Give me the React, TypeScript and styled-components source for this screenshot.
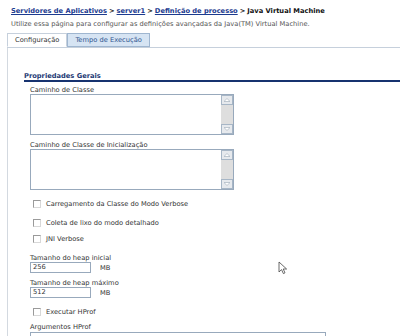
import styled, { createGlobalStyle } from 'styled-components'

const Global = createGlobalStyle`
  html, body {
    margin: 0;
    padding: 0;
    background: #fff;
    width: 400px;
    height: 336px;
    overflow: hidden;
  }
  body {
    font-family: 'DejaVu Sans', Verdana, sans-serif;
    font-size: 6.7px;
    color: #333;
  }
`

const Page = styled.div`
  position: relative;
  width: 400px;
  height: 336px;
  overflow: hidden;
`

const Header = styled.div`
  padding: 6px 0 0 11px;
`

const Crumbs = styled.div`
  font-weight: bold;
  color: #111;
  line-height: 10px;
  white-space: nowrap;
`

const CrumbLink = styled.a`
  color: #1c3b8f;
  text-decoration: underline;
`

const Sep = styled.span`
  color: #111;
  margin: 0 2px;
`

const Description = styled.div`
  color: #555;
  margin-top: 3px;
  line-height: 10px;
  white-space: nowrap;
`

const Tabs = styled.div`
  display: flex;
  margin: 4px 0 0 7px;
  border-bottom: 1px solid #c6d0dc;
  height: 14px;
`

const Tab = styled.div<{ active?: boolean }>`
  display: flex;
  align-items: center;
  padding: 0 7px;
  height: 14px;
  box-sizing: border-box;
  border: 1px solid ${(p) => (p.active ? '#c6d0dc' : '#9fb6d0')};
  border-bottom: ${(p) => (p.active ? '1px solid #fff' : '1px solid #9fb6d0')};
  background: ${(p) => (p.active ? '#fff' : '#d6e4f3')};
  color: ${(p) => (p.active ? '#333' : '#2f5590')};
  margin-bottom: -1px;
  white-space: nowrap;
  position: relative;
  z-index: 1;
`

const Panel = styled.div`
  margin-left: 7px;
  border-left: 1px solid #d3d9e0;
  padding: 25px 0 0 16px;
  height: 300px;
`

const SectionTitle = styled.div`
  font-weight: bold;
  color: #1e3a74;
  line-height: 7px;
  border-bottom: 2px solid #17336f;
`

const Fields = styled.div`
  padding: 4px 0 0 6px;
  display: flex;
  flex-direction: column;
`

const Label = styled.div<{ gap?: number }>`
  line-height: 8px;
  height: 8px;
  color: #333;
  margin-top: ${(p) => p.gap ?? 0}px;
  white-space: nowrap;
`

const Area = styled.div`
  display: flex;
  width: 204px;
  height: 41px;
  box-sizing: border-box;
  border: 1px solid #98a9bc;
  background: #fff;
`

const AreaBody = styled.div`
  flex: 1;
`

const Scroll = styled.div`
  width: 12px;
  background: #dedede;
  display: flex;
  flex-direction: column;
  justify-content: space-between;
`

const ScrollBtn = styled.div`
  width: 12px;
  height: 10px;
  box-sizing: border-box;
  border: 1px solid #a7b6c6;
  background: #e6e9ed;
  display: flex;
  align-items: center;
  justify-content: center;
`

const CheckRow = styled.label<{ gap?: number }>`
  display: flex;
  align-items: center;
  margin: ${(p) => p.gap ?? 0}px 0 0 3px;
  height: 10px;
  white-space: nowrap;
`

const Box = styled.span`
  width: 8px;
  height: 8px;
  box-sizing: border-box;
  border: 1px solid #9a9a9a;
  border-right-color: #d8d8d8;
  border-bottom-color: #d8d8d8;
  background: #fff;
  margin-right: 5px;
`

const SizeRow = styled.div`
  display: flex;
  align-items: center;
  gap: 9px;
`

const SizeInput = styled.div`
  width: 61px;
  height: 11px;
  box-sizing: border-box;
  border: 1px solid #98a9bc;
  padding-left: 2px;
  line-height: 9px;
  color: #333;
`

const WideInput = styled.div`
  margin-top: 1px;
  width: 296px;
  height: 12px;
  box-sizing: border-box;
  border: 1px solid #98a9bc;
  border-bottom: none;
`

const Cursor = styled.svg`
  position: absolute;
  left: 278px;
  top: 261px;
`

const Arrow = ({ down }: { down?: boolean }) => (
  <svg width="6" height="4" viewBox="0 0 6 4">
    <path d={down ? 'M0 0.5H6L3 3.5Z' : 'M0 3.5H6L3 0.5Z'} fill="#fff" stroke="#9aa8b6" strokeWidth="0.6" />
  </svg>
)

const TextArea = () => (
  <Area>
    <AreaBody />
    <Scroll>
      <ScrollBtn>
        <Arrow />
      </ScrollBtn>
      <ScrollBtn>
        <Arrow down />
      </ScrollBtn>
    </Scroll>
  </Area>
)

export default function App() {
  return (
    <Page>
      <Global />
      <Header>
        <Crumbs>
          <CrumbLink>Servidores de Aplicativos</CrumbLink>
          <Sep>&gt;</Sep>
          <CrumbLink>server1</CrumbLink>
          <Sep>&gt;</Sep>
          <CrumbLink>Definição de processo</CrumbLink>
          <Sep>&gt;</Sep>
          Java Virtual Machine
        </Crumbs>
        <Description>
          Utilize essa página para configurar as definições avançadas da Java(TM) Virtual Machine.
        </Description>
      </Header>
      <Tabs>
        <Tab active>Configuração</Tab>
        <Tab>Tempo de Execução</Tab>
      </Tabs>
      <Panel>
        <SectionTitle>Propriedades Gerais</SectionTitle>
        <Fields>
          <Label>Caminho de Classe</Label>
          <TextArea />
          <Label gap={6}>Caminho de Classe de Inicialização</Label>
          <TextArea />
          <CheckRow gap={9}>
            <Box />
            Carregamento da Classe do Modo Verbose
          </CheckRow>
          <CheckRow gap={9}>
            <Box />
            Coleta de lixo do modo detalhado
          </CheckRow>
          <CheckRow gap={6}>
            <Box />
            JNI Verbose
          </CheckRow>
          <Label gap={10}>Tamanho do heap inicial</Label>
          <SizeRow>
            <SizeInput>256</SizeInput>
            MB
          </SizeRow>
          <Label gap={6}>Tamanho de heap máximo</Label>
          <SizeRow>
            <SizeInput>512</SizeInput>
            MB
          </SizeRow>
          <CheckRow gap={9}>
            <Box />
            Executar HProf
          </CheckRow>
          <Label gap={6}>Argumentos HProf</Label>
          <WideInput />
        </Fields>
      </Panel>
      <Cursor width="10" height="14" viewBox="0 0 10 14">
        <path d="M1 1V11L3.5 8.6L5.4 12.6L7 11.8L5.2 8H8.6Z" fill="#fff" stroke="#444" strokeWidth="0.8" />
      </Cursor>
    </Page>
  )
}
